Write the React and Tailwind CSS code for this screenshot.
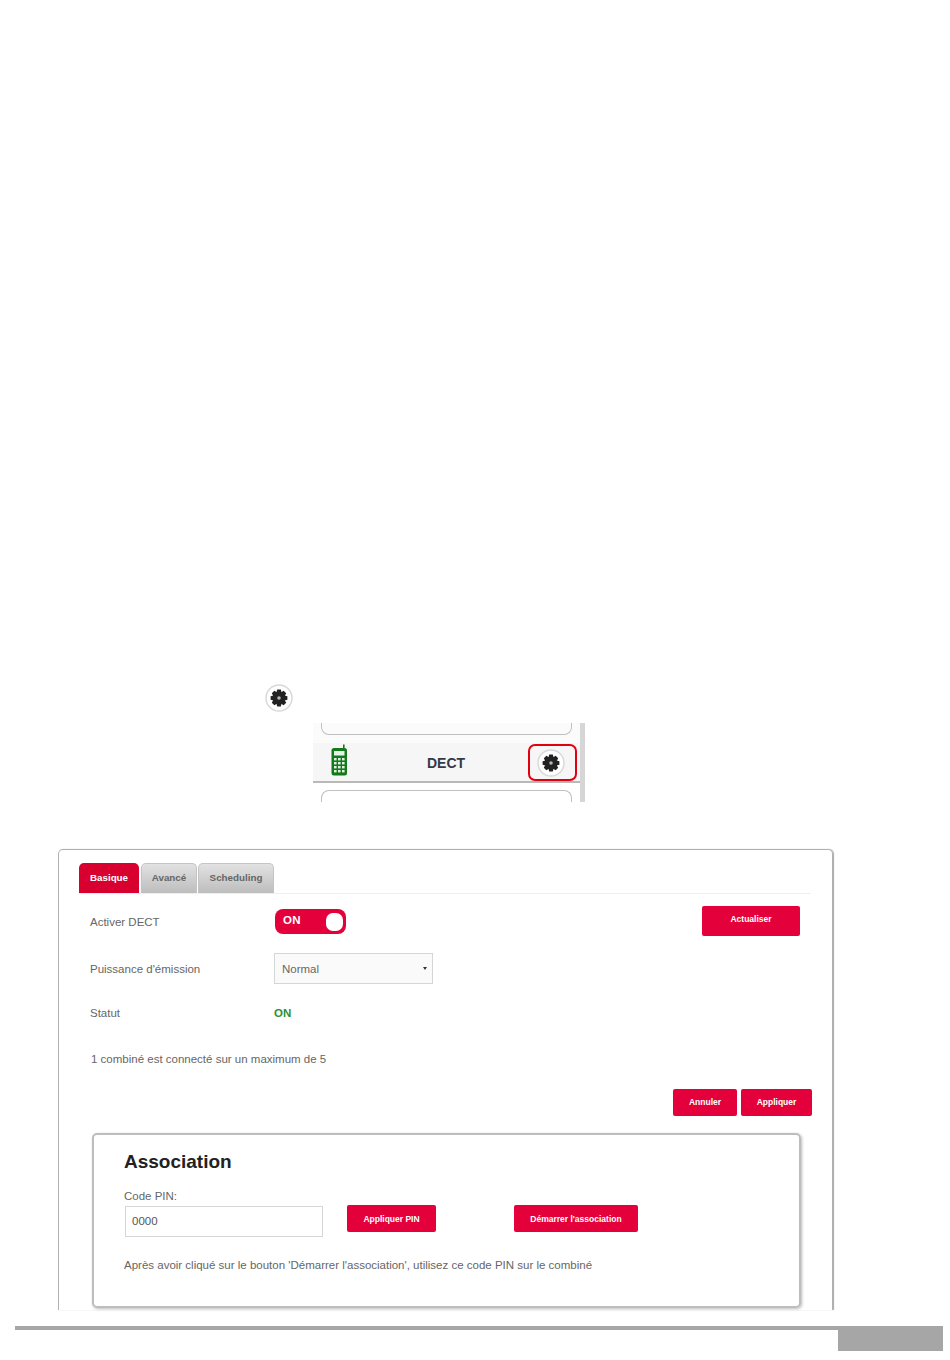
const TEETH = [0, 45, 90, 135, 180, 225, 270, 315];

function Gear({ className }) {
  return (
    <svg viewBox="0 0 28 28" className={className}>
      <circle cx="14" cy="14" r="13" fill="#fff" stroke="#d8d8d8" strokeWidth="1.4" />
      {TEETH.map((a) => (
        <polygon key={a} points="11.2,9.4 12.2,5.6 15.8,5.6 16.8,9.4" fill="#222" transform={`rotate(${a} 14 14)`} />
      ))}
      <circle cx="14" cy="14" r="6.2" fill="#222" />
      <circle cx="14" cy="14" r="1.8" fill="#b5b5b5" />
    </svg>
  );
}

function Phone() {
  return (
    <svg viewBox="0 0 17 32" className="w-[17px] h-[32px] block mb-[4px]">
      <rect x="12" y="0.5" width="1.6" height="6" fill="#137a1c" />
      <rect x="0.5" y="4" width="15.5" height="27.5" rx="2.5" fill="#137a1c" />
      <rect x="3" y="7" width="10.5" height="4.5" fill="#e8f3e8" />
      {[14, 18, 22, 26].map((y) => (
        <g key={y} fill="#dff0df">
          <rect x="3" y={y} width="2.6" height="2.4" />
          <rect x="7" y={y} width="2.6" height="2.4" />
          <rect x="11" y={y} width="2.6" height="2.4" />
        </g>
      ))}
    </svg>
  );
}

function Btn({ className, children }) {
  return (
    <div className={`flex items-center justify-center rounded-[2px] bg-[#e4003a] text-white font-bold text-[8.5px] ${className}`}>
      {children}
    </div>
  );
}

export default function App() {
  return (
    <div className="w-[950px] h-[1360px] bg-white font-['Liberation_Sans',Arial,sans-serif] text-[11.5px] text-[#666] pt-[684px] overflow-hidden">
      <Gear className="block w-[28px] h-[28px] ml-[265px]" />

      <div className="ml-[313px] mt-[11px] w-[272px] h-[79px] bg-white border-r-[5px] border-[#d6d6d6] overflow-hidden">
        <div className="h-[20px] bg-[#fbfbfb]">
          <div className="ml-[8px] w-[251px] h-[12px] border border-t-0 border-[#c0c0c0] rounded-b-[8px]" />
        </div>
        <div className="h-[40px] bg-[#f6f6f6] border-b-2 border-[#b9b9b9] flex items-center pl-[18px] pr-[3px]">
          <Phone />
          <div className="flex-1 text-center font-bold text-[14px] text-[#333a4a] pl-[16px] pt-[2px]">DECT</div>
          <div className="w-[49px] h-[37px] mt-[1px] border-2 border-[#e00010] rounded-[7px] flex items-center justify-center pr-[3px]">
            <Gear className="block w-[28px] h-[28px]" />
          </div>
        </div>
        <div className="mt-[7px] ml-[8px] w-[251px] h-[20px] border border-b-0 border-[#c0c0c0] rounded-t-[8px]" />
      </div>

      <div className="ml-[58px] mt-[47px] w-[775px] h-[461px] border border-b-0 border-[#b0b0b0] rounded-t-[5px] shadow-[1px_0_1px_#aaa] pt-[13px] pl-[20px] pr-[21px]">
        <div className="flex items-end h-[31px] border-b border-[#eeeeee] gap-[1px]">
          <div className="w-[60px] h-[30px] rounded-t-[5px] bg-[#d8002f] text-white font-bold text-[9.8px] flex items-center justify-center">Basique</div>
          <div className="w-[56px] h-[30px] ml-[1px] rounded-t-[5px] border border-b-0 border-[#c4c4c4] bg-gradient-to-b from-[#e2e2e2] to-[#bdbdbd] text-[#666] font-bold text-[9.8px] flex items-center justify-center">Avancé</div>
          <div className="w-[76px] h-[30px] rounded-t-[5px] border border-b-0 border-[#c4c4c4] bg-gradient-to-b from-[#e2e2e2] to-[#bdbdbd] text-[#666] font-bold text-[9.8px] flex items-center justify-center">Scheduling</div>
        </div>

        <div className="flex items-center h-[30px] mt-[12px] pl-[11px] pr-[11px]">
          <div className="w-[185px] pt-[3px]">Activer DECT</div>
          <div className="w-[71px] h-[25px] mt-[1px] rounded-[8px] bg-[#e4003a] flex items-center justify-between pl-[8px] pr-[3px] text-white font-bold text-[11.5px] tracking-[0.3px]">
            <span className="pb-[2px]">ON</span>
            <span className="w-[17px] h-[18px] rounded-[7px] bg-white" />
          </div>
          <Btn className="ml-auto w-[98px] h-[30px] pb-[4px]">Actualiser</Btn>
        </div>

        <div className="flex items-center h-[31px] mt-[17px] pl-[11px]">
          <div className="w-[184px] pt-[2px]">Puissance d'émission</div>
          <div className="w-[159px] h-[31px] border border-[#d6d6d6] bg-[#fafafa] flex items-center justify-between pl-[7px] pr-[5px]">
            <span className="pt-[2px]">Normal</span>
            <span className="w-0 h-0 border-x-[2px] border-t-[3px] border-x-transparent border-t-[#333]" />
          </div>
        </div>

        <div className="flex items-center h-[16px] mt-[22px] pl-[11px]">
          <div className="w-[184px]">Statut</div>
          <div className="font-bold text-[#2e9134]">ON</div>
        </div>

        <div className="h-[16px] mt-[29px] pl-[12px] leading-[16px]">1 combiné est connecté sur un maximum de 5</div>

        <div className="flex justify-end gap-[4px] mt-[22px] -mr-[1px]">
          <Btn className="w-[64px] h-[27px]">Annuler</Btn>
          <Btn className="w-[71px] h-[27px]">Appliquer</Btn>
        </div>

        <div className="ml-[13px] mr-[10px] mt-[17px] h-[175px] border-2 border-[#bdbdbd] rounded-[5px] shadow-[1px_1px_3px_#bbb] pt-[15px] pl-[30px]">
          <div className="text-[19px] leading-[24px] font-bold text-[#222]">Association</div>
          <div className="mt-[14px] leading-[16px]">Code PIN:</div>
          <div className="flex items-start">
            <div className="w-[198px] h-[31px] mt-[2px] ml-[1px] border border-[#d6d6d6] flex items-center pl-[6px] text-[#555]">0000</div>
            <Btn className="w-[89px] h-[27px] ml-[24px] mt-[1px] pt-[1px]">Appliquer PIN</Btn>
            <Btn className="w-[124px] h-[27px] ml-[78px] mt-[1px] pt-[1px]">Démarrer l'association</Btn>
          </div>
          <div className="mt-[20px] leading-[16px]">Après avoir cliqué sur le bouton 'Démarrer l'association', utilisez ce code PIN sur le combiné</div>
        </div>
      </div>

      <div className="flex items-start ml-[15px] mt-[16px] w-[928px]">
        <div className="flex-1 h-[4px] bg-[#a6a6a6]" />
        <div className="w-[105px] h-[25px] bg-[#a6a6a6]" />
      </div>
    </div>
  );
}
